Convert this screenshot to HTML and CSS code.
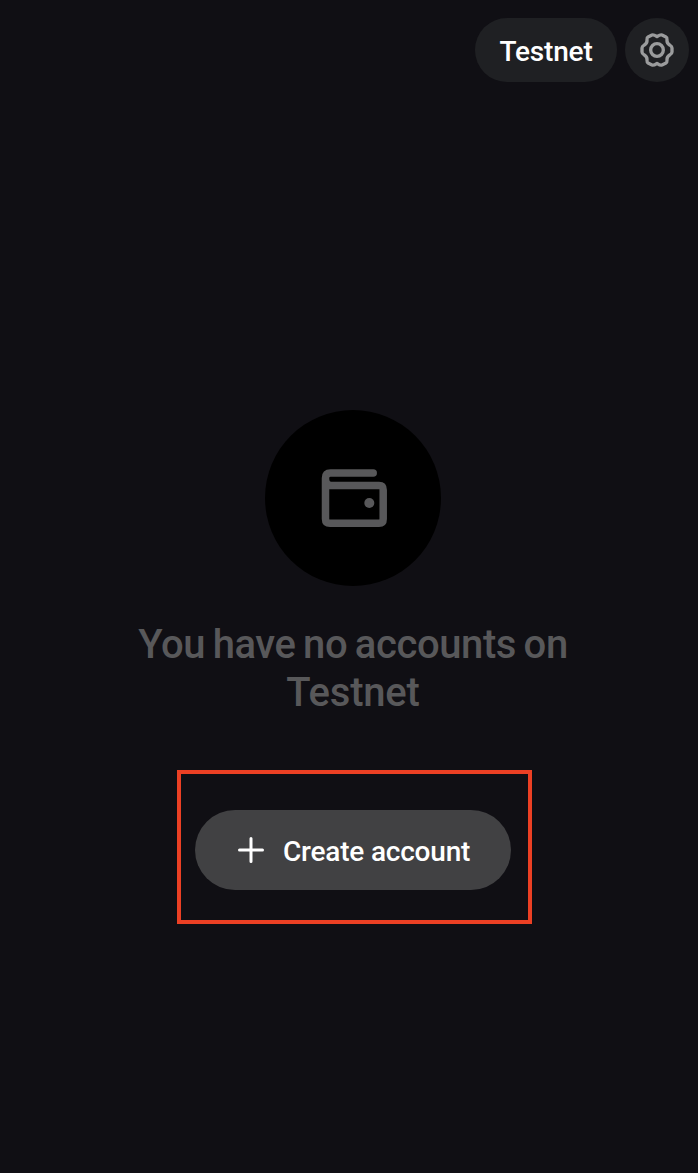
FILE: index.html
```html
<!DOCTYPE html>
<html lang="en">
<head>
<meta charset="utf-8">
<title>Wallet</title>
<link rel="stylesheet" href="styles.css">
</head>
<body>
<header class="topbar">
  <button class="network">Testnet</button>
  <button class="settings" aria-label="Settings">
    <svg width="60" height="60" viewBox="0 0 180 180" fill="none" stroke="#9b9c9d" stroke-width="10" stroke-linejoin="round">
      <path d="M87 50C81 46 77 43 72 45L60 51C56 53 57 57 57 62C57 68 54 72 49 75C44 78 42 79 42 84V96C42 101 44 102 49 105C54 108 57 112 57 118C57 123 56 127 60 129L72 135C77 137 81 134 87 130C93 134 97 137 102 135L114 129C118 127 117 123 117 118C117 112 120 108 125 105C130 102 132 101 132 96V84C132 79 130 78 125 75C120 72 117 68 117 62C117 57 118 53 114 51L102 45C97 43 93 46 87 50Z"/>
      <circle cx="87" cy="90" r="19"/>
    </svg>
  </button>
</header>
<main class="empty">
  <div class="badge">
    <svg width="90" height="85" viewBox="0 0 90 85" fill="none" stroke="#58585a" stroke-width="7.500" stroke-linecap="round">
      <path d="M63.200 18H20.500Q15.500 18 15.500 23V64Q15.500 68.300 20 68.300H69Q73.200 68.300 73.200 64V35Q73.200 30.500 69 30.500H20Q15.500 29.500 15.500 24"/>
      <path d="M17 32V67H72V32Z" stroke-width="4"/>
      <circle cx="59.300" cy="48" r="5" fill="#58585a" stroke="none"/>
    </svg>
  </div>
  <h1 class="title">You have no accounts on <span class="title-line">Testnet</span></h1>
  <div class="highlight">
    <button class="create">
      <svg width="26" height="26" viewBox="0 0 26 26" stroke="#fff" stroke-width="3" stroke-linecap="round"><path d="M13 1.500V24.500M1.500 13H24.500"/></svg>
      <span>Create account</span>
    </button>
  </div>
</main>
</body>
</html>
```
FILE: styles.css
```css
* { box-sizing: border-box; }
body {
  margin: 0;
  min-height: 1173px;
  background: #100f14;
  font-family: Roboto, "Liberation Sans", sans-serif;
  font-weight: 500;
}
button {
  border: 0;
  padding: 0;
  font: inherit;
  color: #fff;
}
svg { display: block; flex: none; }
.topbar {
  display: flex;
  justify-content: flex-end;
  gap: 8px;
  padding: 18px 9px 0 0;
}
.network, .settings {
  height: 64px;
  border-radius: 32px;
  background: #1f2023;
}
.network {
  width: 142px;
  padding-top: 2px;
  font-size: 28px;
  letter-spacing: -0.2px;
}
.settings {
  display: flex;
  align-items: center;
  justify-content: center;
  width: 64px;
  padding-left: 2px;
}
.empty {
  display: flex;
  flex-direction: column;
  align-items: center;
  padding: 328px 0 0 8px;
}
.badge {
  display: flex;
  width: 176px;
  height: 176px;
  padding: 45px 0 0 45px;
  border-radius: 50%;
  background: #000;
}
.title {
  margin: 35px 0 0;
  color: #58585a;
  font-size: 40px;
  font-weight: 500;
  line-height: 48px;
  letter-spacing: -0.4px;
  word-spacing: -2px;
  text-align: center;
  white-space: nowrap;
}
.title-line {
  display: block;
  letter-spacing: -0.2px;
}
.highlight {
  width: 355px;
  height: 154px;
  margin: 53px 0 0 3px;
  padding: 36px 0 0 14px;
  border: 4px solid #ec4024;
}
.create {
  display: flex;
  align-items: center;
  gap: 19px;
  width: 316px;
  height: 80px;
  padding-left: 43px;
  border-radius: 40px;
  background: #414143;
  font-size: 28px;
  letter-spacing: -0.2px;
  white-space: nowrap;
}
.create span { padding-top: 2px; }
```
